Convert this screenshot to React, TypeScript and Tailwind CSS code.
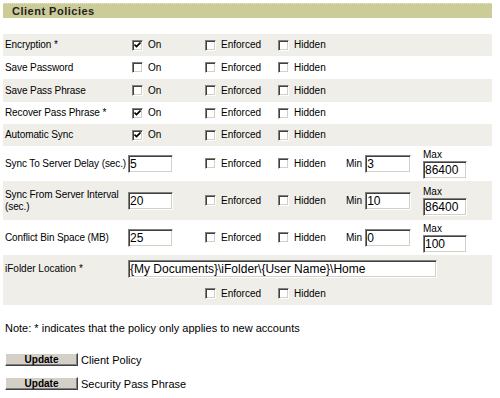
import React from "react";

/* 클래식 체크박스 */
function Box({ checked }: { checked?: boolean }) {
  return (
    <span className="relative inline-block w-[11px] h-[11px] shrink-0 bg-white border border-t-[#808080] border-l-[#808080] border-b-white border-r-white shadow-[inset_1px_1px_0_#404040,inset_-1px_-1px_0_#d4d0c8]">
      {checked && (
        <svg className="absolute left-[1px] top-[1px]" width="7" height="7" viewBox="0 0 7 7">
          <path d="M0.5 2.5 L2.5 4.5 L6.5 0.5" fill="none" stroke="#000" strokeWidth="1.6" />
        </svg>
      )}
    </span>
  );
}

/* 클래식 텍스트 입력칸 */
function Field({ value, w }: { value: string; w: string }) {
  return (
    <input
      readOnly
      value={value}
      className={`${w} h-[18px] bg-white px-[1px] text-[12px] leading-[14px] text-black outline-none border border-t-[#808080] border-l-[#808080] border-b-white border-r-white shadow-[inset_1px_1px_0_#404040,inset_-1px_-1px_0_#d4d0c8]`}
    />
  );
}

function Check({ label, checked, w }: { label: string; checked?: boolean; w: string }) {
  return (
    <div className={`${w} flex items-center pl-[4px] gap-[5px]`}>
      <Box checked={checked} />
      <span>{label}</span>
    </div>
  );
}

function EnfHid() {
  return (
    <>
      <Check label="Enforced" w="w-[73px]" />
      <Check label="Hidden" w="w-[71px]" />
    </>
  );
}

type Row = {
  label: React.ReactNode;
  on?: boolean;
  value?: string;
  min?: string;
  max?: string;
  h: string;
};

const rows: Row[] = [
  { label: "Encryption *", on: true, h: "h-[22px]" },
  { label: "Save Password", on: false, h: "h-[23px]" },
  { label: "Save Pass Phrase", on: false, h: "h-[23px]" },
  { label: "Recover Pass Phrase *", on: true, h: "h-[22px]" },
  { label: "Automatic Sync", on: true, h: "h-[22px]" },
  { label: "Sync To Server Delay (sec.)", value: "5", min: "3", max: "86400", h: "h-[35px]" },
  {
    label: (
      <>
        Sync From Server Interval
        <br />
        (sec.)
      </>
    ),
    value: "20",
    min: "10",
    max: "86400",
    h: "h-[39px]",
  },
  { label: "Conflict Bin Space (MB)", value: "25", min: "0", max: "100", h: "h-[35px]" },
];

export default function App() {
  return (
    <div className="min-h-screen bg-white pl-[3px] pt-[3px] pr-[8px] text-[10px] leading-[12px] text-black font-['Liberation_Sans',Arial,sans-serif]">
      {/* 헤더 */}
      <div className="h-[15px] bg-[#cccc99] border-t border-dotted border-t-[#e8e8c8] pl-[9px] flex items-center">
        <span className="text-[11px] font-bold tracking-[0.5px] text-[#222]">Client Policies</span>
      </div>

      {/* 정책 목록 */}
      <div className="mt-[16px]">
        {rows.map((r, i) => (
          <div key={i} className={`${r.h} flex items-center ${i % 2 === 0 ? "bg-[#efeee9]" : "bg-white"}`}>
            <div className="w-[125px] pl-[2px] whitespace-nowrap tracking-[-0.1px]">{r.label}</div>
            {r.value === undefined ? (
              <Check label="On" checked={r.on} w="w-[73px]" />
            ) : (
              <div className="w-[73px]">
                <Field value={r.value} w="w-[45px]" />
              </div>
            )}
            <EnfHid />
            {r.min !== undefined && (
              <>
                <div className="w-[78px] flex items-center pl-[1px] gap-[3px]">
                  <span>Min</span>
                  <Field value={r.min} w="w-[46px]" />
                </div>
                <div className="flex flex-col">
                  <span>Max</span>
                  <Field value={r.max!} w="w-[44px]" />
                </div>
              </>
            )}
          </div>
        ))}

        {/* iFolder 위치 */}
        <div className="bg-[#efeee9] h-[50px] flex flex-col">
          <div className="h-[27px] flex items-center">
            <div className="w-[125px] pl-[2px]">iFolder Location *</div>
            <Field value="{My Documents}\iFolder\{User Name}\Home" w="w-[309px]" />
          </div>
          <div className="h-[23px] flex items-center pl-[198px]">
            <EnfHid />
          </div>
        </div>
      </div>

      <p className="mt-[17px] pl-[2px] text-[11px] leading-[13px]">Note: * indicates that the policy only applies to new accounts</p>

      {/* 업데이트 버튼 */}
      <div className="mt-[18px] pl-[2px] flex flex-col gap-[11px]">
        {["Client Policy", "Security Pass Phrase"].map((t) => (
          <div key={t} className="flex items-center gap-[3px]">
            <button className="w-[73px] h-[13px] bg-[#d4d0c8] text-[10px] leading-[10px] font-bold text-black border border-t-white border-l-white border-b-[#404040] border-r-[#404040] shadow-[inset_-1px_-1px_0_#808080]">
              Update
            </button>
            <span className="text-[11px]">{t}</span>
          </div>
        ))}
      </div>
    </div>
  );
}
